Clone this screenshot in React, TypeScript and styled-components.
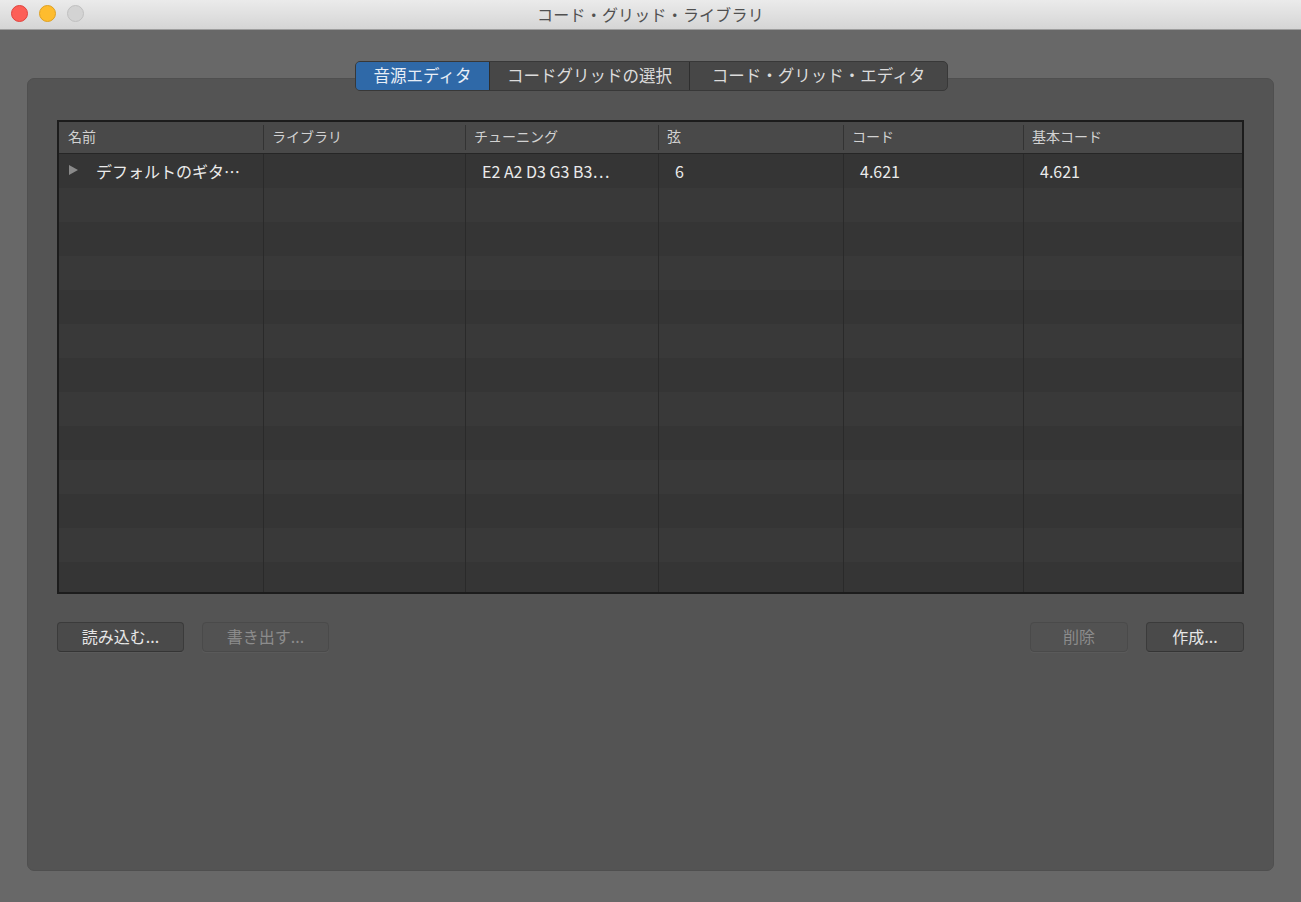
import React, { FC } from 'react';
import styled, { createGlobalStyle } from 'styled-components';

const GlobalStyle = createGlobalStyle`
  html, body {
    margin: 0;
    padding: 0;
    background: #686868;
  }
  body {
    font-family: 'Noto Sans CJK JP', 'Noto Sans', 'Liberation Sans', sans-serif;
    -webkit-font-smoothing: antialiased;
  }
  * { box-sizing: border-box; }
`;

const columns = [
  { key: 'name', label: '名前', width: 204 },
  { key: 'lib', label: 'ライブラリ', width: 202 },
  { key: 'tuning', label: 'チューニング', width: 193 },
  { key: 'strings', label: '弦', width: 185 },
  { key: 'chord', label: 'コード', width: 180 },
  { key: 'base', label: '基本コード', width: 219 },
];

const gridTemplate = columns.map((c) => `${c.width}px`).join(' ');

const rows = [
  { name: 'デフォルトのギタ…', lib: '', tuning: 'E2 A2 D3 G3 B3…', strings: '6', chord: '4.621', base: '4.621' },
];

const EMPTY_ROWS = 13;

const App: FC = () => {
  return (
    <>
      <GlobalStyle />
      <Window>
        <TitleBar>
          <Lights>
            <Light color="#fd5f57" border="#e0443e" />
            <Light color="#febc2e" border="#dea123" />
            <Light color="#d3d3d3" border="#c0c0c0" />
          </Lights>
          <Title>コード・グリッド・ライブラリ</Title>
        </TitleBar>
        <Content>
          <TabBar>
            <Tab active w={133}>音源エディタ</Tab>
            <Tab w={200}>コードグリッドの選択</Tab>
            <Tab w={258}>コード・グリッド・エディタ</Tab>
          </TabBar>
          <Panel>
            <Table>
              <HeaderRow>
                {columns.map((c) => (
                  <HeaderCell key={c.key}>{c.label}</HeaderCell>
                ))}
              </HeaderRow>
              <Body>
                {Array.from({ length: EMPTY_ROWS }).map((_, i) => {
                  const r = rows[i];
                  return (
                    <Row key={i} odd={i % 2 === 1}>
                      <Cell>
                        {r && (
                          <>
                            <Disclosure />
                            {r.name}
                          </>
                        )}
                      </Cell>
                      <Cell>{r?.lib}</Cell>
                      <Cell>{r?.tuning}</Cell>
                      <Cell>{r?.strings}</Cell>
                      <Cell>{r?.chord}</Cell>
                      <Cell>{r?.base}</Cell>
                    </Row>
                  );
                })}
              </Body>
            </Table>
            <ButtonBar>
              <ButtonGroup>
                <Button w={127}>読み込む...</Button>
                <Button w={127} disabled>書き出す...</Button>
              </ButtonGroup>
              <ButtonGroup>
                <Button w={98} disabled>削除</Button>
                <Button w={98}>作成...</Button>
              </ButtonGroup>
            </ButtonBar>
          </Panel>
        </Content>
      </Window>
    </>
  );
};

export default App;

const Window = styled.div`
  width: 1301px;
  height: 902px;
  background: #686868;
  display: flex;
  flex-direction: column;
  overflow: hidden;
`;

const TitleBar = styled.header`
  position: relative;
  height: 30px;
  flex-shrink: 0;
  background: linear-gradient(#ebebeb, #d5d5d5);
  border-bottom: 1px solid #9e9e9e;
  display: flex;
  align-items: center;
  justify-content: center;
`;

const Lights = styled.div`
  position: absolute;
  left: 11px;
  top: 5px;
  display: flex;
  column-gap: 11px;
`;

const Light = styled.span<{ color: string; border: string }>`
  width: 17px;
  height: 17px;
  border-radius: 50%;
  background: ${(p) => p.color};
  border: 1px solid ${(p) => p.border};
`;

const Title = styled.div`
  font-size: 16px;
  color: #505050;
  letter-spacing: 0.2px;
  padding-bottom: 2px;
`;

const Content = styled.main`
  flex: 1;
  display: flex;
  flex-direction: column;
  padding: 31px 27px 31px 27px;
`;

const TabBar = styled.div`
  position: relative;
  z-index: 1;
  align-self: center;
  display: flex;
  height: 30px;
  margin-left: 2px;
  background: #474747;
  border: 1px solid #383838;
  border-radius: 5px;
  overflow: hidden;
`;

const Tab = styled.div<{ active?: boolean; w: number }>`
  width: ${(p) => p.w}px;
  display: flex;
  align-items: center;
  justify-content: center;
  padding-bottom: 3px;
  font-size: 16.5px;
  color: ${(p) => (p.active ? '#e8eef6' : '#dcdcdc')};
  background: ${(p) => (p.active ? '#2f69a8' : 'transparent')};
  & + & {
    border-left: 1px solid #2e2e2e;
  }
`;

const Panel = styled.section`
  flex: 1;
  margin-top: -13px;
  background: #545454;
  border: 1px solid #4f4f4f;
  border-radius: 7px;
  padding: 41px 29px 0 29px;
  display: flex;
  flex-direction: column;
`;

const Table = styled.div`
  height: 474px;
  border: 2px solid #1c1c1c;
  background: #353535;
  display: flex;
  flex-direction: column;
  overflow: hidden;
`;

const HeaderRow = styled.div`
  display: grid;
  grid-template-columns: ${gridTemplate};
  height: 32px;
  flex-shrink: 0;
  background: #494949;
  border-bottom: 1px solid #262626;
`;

const HeaderCell = styled.div`
  display: flex;
  align-items: center;
  padding-left: 9px;
  padding-bottom: 4px;
  font-size: 14px;
  color: #d2d2d2;
  position: relative;
  & + &::before {
    content: '';
    position: absolute;
    left: 0;
    top: 3px;
    bottom: 3px;
    width: 1px;
    background: #333;
  }
`;

const Body = styled.div`
  flex: 1;
  overflow: hidden;
`;

const Row = styled.div<{ odd: boolean }>`
  display: grid;
  grid-template-columns: ${gridTemplate};
  height: 34px;
  background: ${(p) => (p.odd ? '#393939' : '#353535')};
`;

const Cell = styled.div`
  display: flex;
  align-items: center;
  padding-left: 16px;
  font-size: 16px;
  color: #ebebeb;
  white-space: nowrap;
  & + & {
    border-left: 1px solid #2a2a2a;
  }
  &:first-child {
    padding-left: 10px;
  }
`;

const Disclosure = styled.span`
  width: 0;
  height: 0;
  border-top: 5px solid transparent;
  border-bottom: 5px solid transparent;
  border-left: 9px solid #8a8a8a;
  margin-right: 18px;
  margin-top: -2px;
`;

const ButtonBar = styled.div`
  display: flex;
  justify-content: space-between;
  margin-top: 28px;
`;

const ButtonGroup = styled.div`
  display: flex;
  column-gap: 18px;
`;

const Button = styled.button<{ w: number }>`
  width: ${(p) => p.w}px;
  height: 30px;
  padding: 0 0 2px 0;
  font-family: inherit;
  font-size: 16px;
  color: #e6e6e6;
  background: #4a4a4a;
  border: 1px solid #3b3b3b;
  border-bottom-color: #353535;
  border-radius: 4px;
  box-shadow: 0 1px 0 rgba(255, 255, 255, 0.04);
  &:disabled {
    color: #8c8c8c;
    background: #525252;
    border-color: #4a4a4a;
  }
`;
